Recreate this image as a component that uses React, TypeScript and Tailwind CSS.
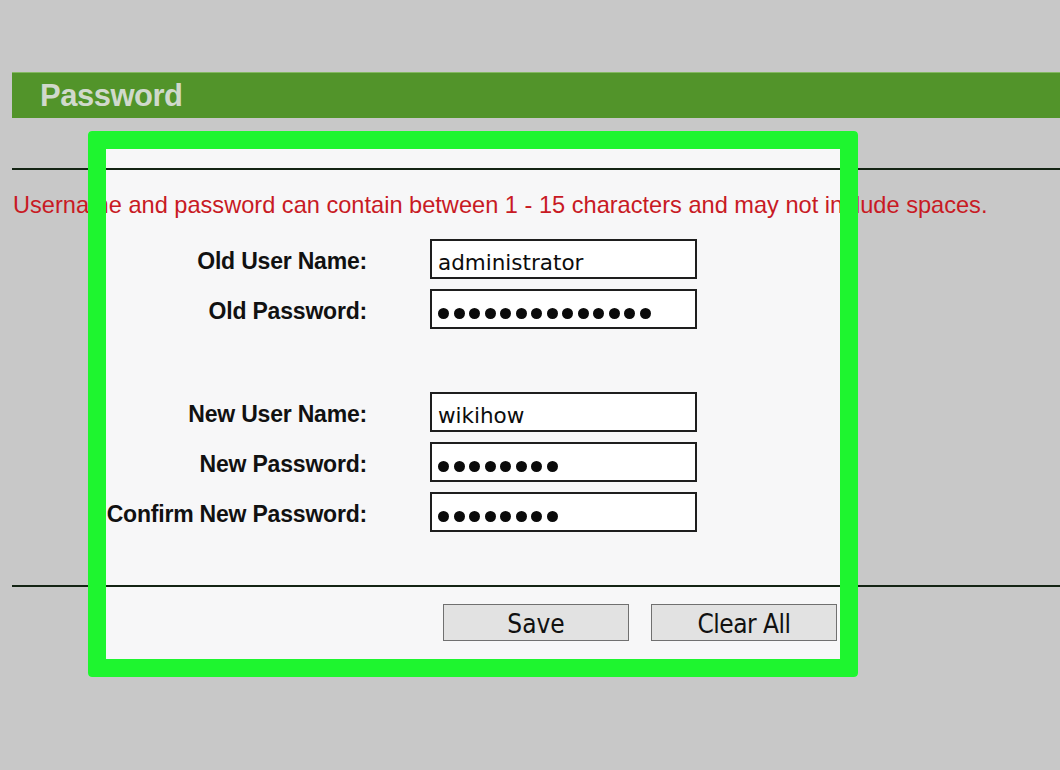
import React from "react";

const Dots = ({ n }: { n: number }) => (
  <div className="flex gap-[4.5px] pt-[8px]">
    {Array.from({ length: n }).map((_, i) => (
      <div key={i} className="w-[11px] h-[11px] rounded-full bg-[#0a0a0a]" />
    ))}
  </div>
);

const Row = ({ label, children }: { label: string; children: React.ReactNode }) => (
  <div className="flex items-center h-[40px]">
    <div className="w-[367px] text-right pt-[4px] font-bold text-[23px] tracking-[-0.2px] text-[#111] font-['Liberation_Sans',Arial,sans-serif] whitespace-nowrap">
      {label}
    </div>
    <div className="ml-[63px] w-[267px] h-[40px] border-2 border-[#1e1e1e] bg-white flex items-center pl-[6px] font-['DejaVu_Sans',sans-serif] text-[21.5px] text-[#0c0c0c]">
      {children}
    </div>
  </div>
);

export default function App() {
  return (
    <div className="relative w-[1060px] h-[770px] overflow-hidden bg-[#c8c8c8] font-['Liberation_Sans',Arial,sans-serif]">
      {/* highlight fill */}
      <div className="absolute left-[88px] top-[131px] w-[770px] h-[546px] rounded-[4px] bg-[#f7f7f8] z-0" />

      <div className="relative z-10 pt-[72px]">
        <div className="ml-[12px] h-[46px] bg-[#52942a] border-t border-[#84b862] flex items-center pl-[28px]">
          <span className="font-bold text-[31px] tracking-[-0.5px] text-[#d0d9cc] leading-none">Password</span>
        </div>

        <div className="mt-[50px] ml-[12px] h-[2px] bg-[#142414]" />

        <div className="mt-[21px] pl-[13px] text-[23.6px] leading-[28px] text-[#c81a24] whitespace-nowrap">
          Username and password can contain between 1 - 15 characters and may not include spaces.
        </div>

        <div className="mt-[20px] flex flex-col gap-[10px]">
          <Row label="Old User Name:">
            <span className="pt-[8px]">administrator</span>
          </Row>
          <Row label="Old Password:">
            <Dots n={14} />
          </Row>
        </div>

        <div className="mt-[63px] flex flex-col gap-[10px]">
          <Row label="New User Name:">
            <span className="pt-[8px]">wikihow</span>
          </Row>
          <Row label="New Password:">
            <Dots n={8} />
          </Row>
          <Row label="Confirm New Password:">
            <Dots n={8} />
          </Row>
        </div>

        <div className="mt-[53px] ml-[12px] h-[2px] bg-[#142414]" />

        <div className="mt-[17px] ml-[443px] flex gap-[22px]">
          <div className="w-[186px] h-[37px] bg-[#e2e2e2] border-[1.5px] border-[#707070] flex items-center justify-center pt-[4px] text-[26px] text-[#111] font-['DejaVu_Sans_Condensed','DejaVu_Sans',sans-serif] [font-stretch:condensed]">
            Save
          </div>
          <div className="w-[186px] h-[37px] bg-[#e2e2e2] border-[1.5px] border-[#707070] flex items-center justify-center pt-[4px] text-[26px] tracking-[-0.5px] text-[#111] font-['DejaVu_Sans_Condensed','DejaVu_Sans',sans-serif] [font-stretch:condensed]">
            Clear All
          </div>
        </div>
      </div>

      {/* highlight frame */}
      <div className="absolute left-[88px] top-[131px] w-[770px] h-[546px] rounded-[4px] border-[18px] border-[#1ef52f] z-20 pointer-events-none" />
    </div>
  );
}
